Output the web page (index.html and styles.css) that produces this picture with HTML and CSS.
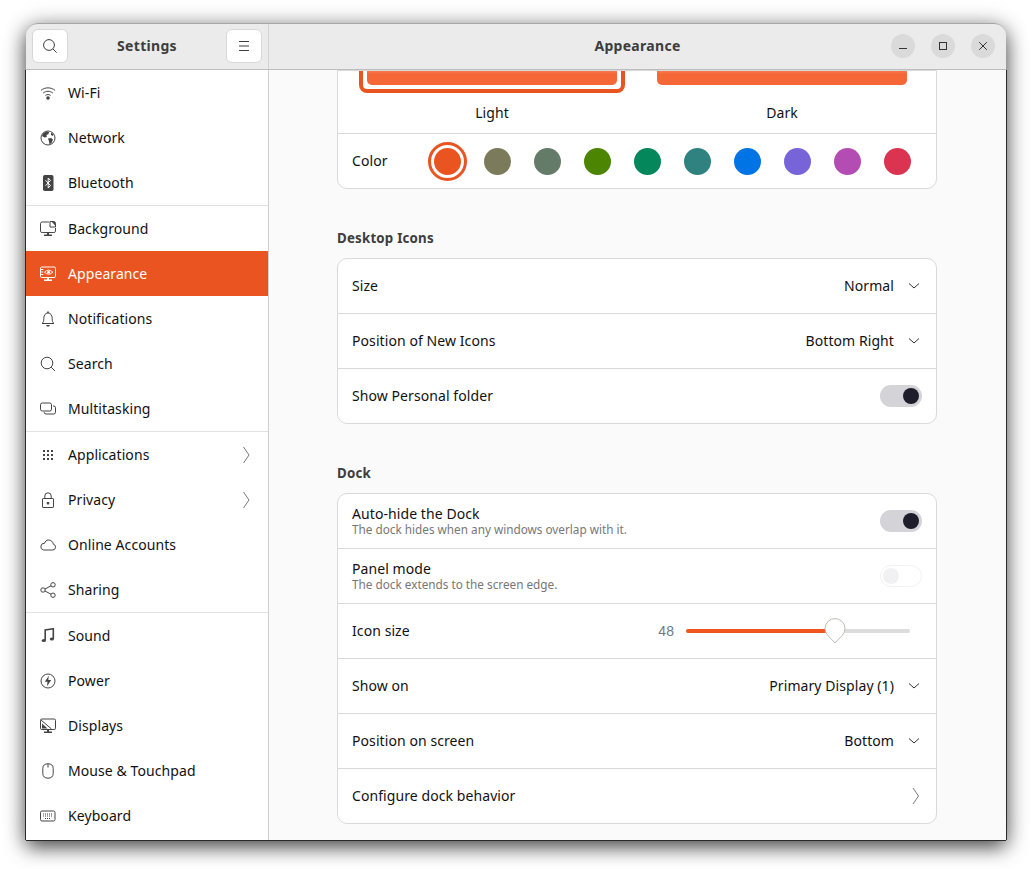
FILE: index.html
```html
<!DOCTYPE html>
<html lang="en">
<head>
<meta charset="utf-8">
<title>Settings</title>
<link rel="stylesheet" href="styles.css">
</head>
<body>
<div class="window">
  <header class="titlebar">
    <div class="title-left">
      <button class="hbtn"><svg class="ic" viewBox="0 0 16 16"><circle cx="7" cy="7" r="5.4"/><path d="M11 11l3.6 3.6"/></svg></button>
      <span class="title">Settings</span>
      <button class="hbtn"><svg class="ic" viewBox="0 0 16 16"><path d="M3 3.5h10M3 8h10M3 12.5h10"/></svg></button>
    </div>
    <div class="title-right">
      <span class="title main-title">Appearance</span>
      <div class="controls">
        <span class="wc"><svg class="ic" viewBox="0 0 16 16"><path d="M4 10.500h8"/></svg></span>
        <span class="wc"><svg class="ic" viewBox="0 0 16 16"><rect x="4.500" y="4.500" width="7" height="7"/></svg></span>
        <span class="wc"><svg class="ic" viewBox="0 0 16 16"><path d="M4.200 4.200l7.600 7.600M11.800 4.200l-7.600 7.600"/></svg></span>
      </div>
    </div>
  </header>
  <div class="body">
    <nav class="sidebar">
      <a class="item"><svg class="ic" viewBox="0 0 16 16"><path d="M1 5.400C5 2 11 2 15 5.400M3.200 8C6 5.700 10 5.700 12.800 8M5.400 10.400C6.900 9.300 9.100 9.300 10.600 10.400"/><circle class="f" cx="8" cy="13" r="1.800"/></svg><span>Wi-Fi</span></a>
      <a class="item"><svg class="ic" viewBox="0 0 16 16"><circle cx="8" cy="8" r="7"/><path class="f" d="M3 3.500L6.500 1.500 9 2 8.500 4 6.500 5 6.800 7 4.500 7.500 2 6zM8 8.500l3-.5 2 1.500-1.500 3.500-2 1.500-.5-3zM11 2.500l2.500 2-.5 1.500-2-1z"/></svg><span>Network</span></a>
      <a class="item"><svg class="ic" viewBox="0 0 16 16"><rect class="f" x="3" y="0" width="10.500" height="16" rx="1.800"/><path class="w" d="M5.500 5.300l5 5.200L8.200 13V3l2.300 2.500-5 5.200"/></svg><span>Bluetooth</span></a>
      <div class="sep"></div>
      <a class="item"><svg class="ic" viewBox="0 0 16 16"><path d="M9 1H2.200Q.5 1 .5 2.700v7.600q0 1.200 1.700 1.200h11.600q1.700 0 1.700-1.200V7"/><path d="M10 .5h3.500q2 0 2 2V6H10z"/><path class="f" d="M11.500.5h2q2 0 2 2V5z"/><path class="f" d="M7 12h2v1.500h3V15H4v-1.500h3z"/></svg><span>Background</span></a>
      <a class="item active"><svg class="ic" viewBox="0 0 16 16"><rect x=".5" y="1" width="15" height="10.500" rx="1.300"/><path d="M4.500 6.200Q8.500 2 12.800 6.200 8.500 10.200 4.500 6.200zM.8 3.500h2.500M.8 6h2.500M.8 8.500h2.500"/><circle class="f" cx="8.600" cy="6.200" r="1.400"/><path class="f" d="M7 12h2v1.500h3V15H4v-1.500h3z"/></svg><span>Appearance</span></a>
      <a class="item"><svg class="ic" viewBox="0 0 16 16"><path d="M2 12.500c1.500-1 1.800-2.300 1.800-5C3.800 4 5.500 2 8 2s4.200 2 4.200 5.500c0 2.700.3 4 1.800 5z"/><path class="f" d="M6 14h4l-1 1.500H7zM7.200.5h1.600V2H7.200z"/></svg><span>Notifications</span></a>
      <a class="item"><svg class="ic" viewBox="0 0 16 16"><circle cx="7" cy="7" r="5.800"/><path d="M11.200 11.200l3.800 3.800"/></svg><span>Search</span></a>
      <a class="item"><svg class="ic" viewBox="0 0 16 16"><rect x=".5" y="2" width="11" height="8" rx="1.800"/><path d="M13 5h.7q1.800 0 1.800 1.800v4.400q0 1.800-1.800 1.800H6q-1.800 0-1.800-1.800"/></svg><span>Multitasking</span></a>
      <div class="sep"></div>
      <a class="item"><svg class="ic" viewBox="0 0 16 16"><path class="f" d="M3 3h2v2H3zM7 3h2v2H7zM11 3h2v2h-2zM3 7h2v2H3zM7 7h2v2H7zM11 7h2v2h-2zM3 11h2v2H3zM7 11h2v2H7zM11 11h2v2h-2z"/></svg><span>Applications</span><svg class="ic chev" viewBox="0 0 16 16"><path d="M4.500 0L10 8l-5.500 8"/></svg></a>
      <a class="item"><svg class="ic" viewBox="0 0 16 16"><rect x="2.500" y="6.500" width="11" height="9" rx=".6"/><path d="M4.800 6.500V4a3.200 3.200 0 0 1 6.400 0v2.500"/><rect class="f" x="6.800" y="10" width="2.400" height="2.400"/></svg><span>Privacy</span><svg class="ic chev" viewBox="0 0 16 16"><path d="M4.500 0L10 8l-5.500 8"/></svg></a>
      <a class="item"><svg class="ic" viewBox="0 0 16 16"><path d="M3.500 13h9.300a2.900 2.900 0 0 0 .6-5.700C13 4.800 11 3 8.600 3 6.500 3 5 4.400 4.600 6.300A3.400 3.400 0 0 0 3.500 13z"/></svg><span>Online Accounts</span></a>
      <a class="item"><svg class="ic" viewBox="0 0 16 16"><circle cx="3" cy="8" r="2.200"/><circle cx="13" cy="2.800" r="2.200"/><circle cx="13" cy="13.200" r="2.200"/><path d="M5 7l6-3.200M5 9l6 3.200"/></svg><span>Sharing</span></a>
      <div class="sep"></div>
      <a class="item"><svg class="ic" viewBox="0 0 16 16"><path class="thick" d="M5.200 12.500V2L13.300.8V11"/><ellipse class="f" cx="3.800" cy="12.500" rx="2.100" ry="1.600"/><ellipse class="f" cx="11.900" cy="11" rx="2.100" ry="1.600"/></svg><span>Sound</span></a>
      <a class="item"><svg class="ic" viewBox="0 0 16 16"><circle cx="8" cy="8" r="7"/><path class="f" d="M8.800 2.800L4.800 8.800h2.700l-.5 4.400 4.200-6.200H8.300z"/></svg><span>Power</span></a>
      <a class="item"><svg class="ic" viewBox="0 0 16 16"><rect x=".5" y="1" width="15" height="10.500" rx="1.300"/><path d="M1 2l10.500 9"/><path class="f" d="M2 5.500l5.500 5H2z"/><path class="f" d="M7 12h2v1.500h3V15H4v-1.500h3z"/></svg><span>Displays</span></a>
      <a class="item"><svg class="ic" viewBox="0 0 16 16"><path d="M8 .8C5 .8 2.800 2 2.800 5.500v5c0 3 2 4.700 5.200 4.700s5.200-1.700 5.200-4.700v-5C13.200 2 11 .8 8 .8zM8 .8v3.700"/></svg><span>Mouse &amp; Touchpad</span></a>
      <a class="item"><svg class="ic" viewBox="0 0 16 16"><rect x=".5" y="3" width="14.500" height="10" rx="1.500"/><path class="hair" d="M3 6h9.500M3 8h9.500M5 10.500h6" stroke-dasharray="1 1"/></svg><span>Keyboard</span></a>
    </nav>
    <main class="content">
      <section class="card">
        <div class="themes">
          <div class="theme"><div class="frame selected"><div class="thumb"></div></div><span class="label">Light</span></div>
          <div class="theme"><div class="frame"><div class="thumb"></div></div><span class="label">Dark</span></div>
        </div>
        <div class="row color-row">
          <span class="label color-label">Color</span>
          <div class="dots">
            <span class="dot current c1"></span><span class="dot c2"></span><span class="dot c3"></span><span class="dot c4"></span><span class="dot c5"></span><span class="dot c6"></span><span class="dot c7"></span><span class="dot c8"></span><span class="dot c9"></span><span class="dot c10"></span>
          </div>
        </div>
      </section>

      <h2 class="heading">Desktop Icons</h2>
      <section class="card">
        <div class="row"><span class="label">Size</span><span class="value"><span class="label">Normal</span><svg class="ic down" viewBox="0 0 12 12"><path d="M1 3.500l5 4.500 5-4.500"/></svg></span></div>
        <div class="row"><span class="label">Position of New Icons</span><span class="value"><span class="label">Bottom Right</span><svg class="ic down" viewBox="0 0 12 12"><path d="M1 3.500l5 4.500 5-4.500"/></svg></span></div>
        <div class="row"><span class="label">Show Personal folder</span><span class="switch on"><i></i></span></div>
      </section>

      <h2 class="heading">Dock</h2>
      <section class="card">
        <div class="row"><div class="two"><span class="label">Auto-hide the Dock</span><small>The dock hides when any windows overlap with it.</small></div><span class="switch on"><i></i></span></div>
        <div class="row"><div class="two"><span class="label">Panel mode</span><small>The dock extends to the screen edge.</small></div><span class="switch off"><i></i></span></div>
        <div class="row"><span class="label">Icon size</span>
          <div class="slider"><span class="num">48</span><div class="track"><div class="fill"></div><svg class="pin" viewBox="0 0 22 26"><path d="M11 25L3.800 17.500A10 10 0 1 1 18.200 17.500z"/></svg></div></div>
        </div>
        <div class="row"><span class="label">Show on</span><span class="value"><span class="label">Primary Display (1)</span><svg class="ic down" viewBox="0 0 12 12"><path d="M1 3.500l5 4.500 5-4.500"/></svg></span></div>
        <div class="row"><span class="label">Position on screen</span><span class="value"><span class="label">Bottom</span><svg class="ic down" viewBox="0 0 12 12"><path d="M1 3.500l5 4.500 5-4.500"/></svg></span></div>
        <div class="row"><span class="label">Configure dock behavior</span><svg class="ic next" viewBox="0 0 8 16"><path d="M1 0l5.500 8L1 16"/></svg></div>
      </section>
    </main>
  </div>
</div>
</body>
</html>
```
FILE: styles.css
```css
* { box-sizing: border-box; }
html, body { margin: 0; height: 100%; }
body {
  background: #fff;
  padding: 23px 26px 29px;
  font-family: "Noto Sans", "Open Sans", sans-serif;
  font-size: 14px;
  letter-spacing: .08px;
  color: #111;
  overflow: hidden;
}
.window {
  width: 980px;
  height: 817px;
  display: flex;
  flex-direction: column;
  border-radius: 12px 12px 0 0;
  box-shadow: 0 7px 20px rgba(0,0,0,.7), 0 0 24px rgba(0,0,0,.15);
}
.ic { width: 16px; height: 16px; flex: none; fill: none; stroke: currentColor; stroke-width: 1; }
.ic .f { fill: currentColor; stroke: none; }
.ic .w { stroke: #fff; fill: none; }
.ic .thick { stroke-width: 1.600; }
.ic .hair { stroke-width: 1; }

.titlebar {
  height: 47px;
  flex: none;
  display: flex;
  background: #ebebeb;
  border-top: 1px solid #a6a6a6;
  border-bottom: 1px solid #bdbdbd;
  border-radius: 12px 12px 0 0;
  color: #3d3d3d;
}
.title-left {
  width: 243px;
  flex: none;
  display: flex;
  align-items: center;
  justify-content: space-between;
  padding: 0 6px 1px;
  border-right: 1px solid #d3d3d3;
}
.title-right { flex: 1; position: relative; display: flex; align-items: center; justify-content: center; padding-bottom: 1px; }
.title { font-weight: 700; font-size: 14px; letter-spacing: .3px; padding-bottom: 1px; }
.hbtn {
  width: 36px;
  height: 34px;
  display: flex;
  align-items: center;
  justify-content: center;
  padding: 0;
  background: #fff;
  border: 1px solid #d8d8d8;
  border-radius: 6px;
  color: #3d3d3d;
}
.controls { position: absolute; right: 11px; top: 10px; display: flex; gap: 16px; }
.wc { width: 24px; height: 24px; border-radius: 50%; background: #dadada; display: flex; align-items: center; justify-content: center; color: #333; }

.body {
  flex: 1;
  min-height: 0;
  display: flex;
  box-shadow: -1px 0 0 #2a2a2a, 1px 0 0 #2a2a2a, 0 1px 0 #2a2a2a;
}
.sidebar {
  width: 243px;
  flex: none;
  background: #fff;
  border-right: 1px solid #cfcfcf;
  overflow: hidden;
}
.item {
  height: 45px;
  display: flex;
  align-items: center;
  gap: 12px;
  padding: 0 13px 0 14px;
  color: #111;
}
.item > .ic { color: #444; }
.item.active { background: #e95420; color: #fff; }
.item.active > .ic { color: #fff; }
.sep { height: 1px; background: #e2e2e2; }
.item > .chev { margin-left: auto; color: #777; }

.content {
  flex: 1;
  min-width: 0;
  background: #fafafa;
  padding: 0 68px;
  overflow: hidden;
}
.card {
  width: 600px;
  background: #fff;
  border: 1px solid #d9d9d9;
  border-radius: 0 0 10px 10px;
}
.card + .heading + .card { border-radius: 10px; }
.heading {
  margin: 41px 0 11px;
  height: 17px;
  line-height: 17px;
  font-size: 13.300px;
  font-weight: 700;
  color: #3d3d3d;
  letter-spacing: .2px;
}
.themes {
  height: 63px;
  display: grid;
  grid-template-columns: 266px 266px;
  column-gap: 24px;
  padding-left: 21px;
  border-bottom: 1px solid #d9d9d9;
}
.theme { display: flex; flex-direction: column; align-items: center; }
.frame {
  width: 266px;
  height: 22px;
  padding: 0 4px 4px;
  border: 4px solid transparent;
  border-top: 0;
  border-radius: 0 0 8px 8px;
}
.frame.selected { border-color: #e95420; }
.thumb { height: 14px; background: linear-gradient(#f77a50, #f66737 3px); border-radius: 0 0 5px 5px; }
.theme .label { margin-top: 10px; line-height: 20px; padding-bottom: 0; }

.row {
  height: 55px;
  display: flex;
  align-items: center;
  justify-content: space-between;
  padding: 0 14px;
  border-bottom: 1px solid #d9d9d9;
}
.row:last-child { height: 54px; border-bottom: 0; }
.label { color: #111; padding-bottom: 2px; }
.value { display: flex; align-items: center; gap: 14px; padding-right: 2px; }
.down { width: 12px; height: 12px; color: #333; }
.next { width: 8px; height: 16px; color: #777; margin-right: 2px; }
.two { display: flex; flex-direction: column; line-height: 15px; }
.two .label { padding-bottom: 1px; }
.two small { font-size: 11.750px; color: #777; letter-spacing: 0; }

.color-row { padding-right: 25.500px; }
.color-row .label { line-height: 20px; padding-bottom: 0; }
.dots { display: flex; gap: 23px; align-items: center; }
.dot { width: 27px; height: 27px; border-radius: 50%; position: relative; }
.dot.current::after {
  content: "";
  position: absolute;
  inset: -6px;
  border: 3.500px solid #e95420;
  border-radius: 50%;
}
.c1 { background: #e95420; }
.c2 { background: #7b7a5a; }
.c3 { background: #657b69; }
.c4 { background: #4b8501; }
.c5 { background: #03875b; }
.c6 { background: #308280; }
.c7 { background: #0073e5; }
.c8 { background: #7764d8; }
.c9 { background: #b34cb3; }
.c10 { background: #da3450; }

.switch { width: 42px; height: 22px; border-radius: 11px; display: flex; align-items: center; padding: 0 3px; }
.switch i { width: 16px; height: 16px; border-radius: 50%; display: block; }
.switch.on { background: #d3d3d8; justify-content: flex-end; }
.switch.on i { background: #1d1d2b; }
.switch.off { border: 1px solid #f2f2f2; background: #fff; padding: 0 2px; }
.switch.off i { background: #f1f1f3; }

.slider { display: flex; align-items: center; gap: 12px; margin-right: 12px; }
.num { font-family: "Liberation Sans", sans-serif; font-size: 14px; color: #777; }
.track { width: 224px; height: 4px; background: #dcdcdc; border-radius: 2px; position: relative; }
.fill { width: 146px; height: 4px; background: #f0561d; border-radius: 2px; }
.pin { position: absolute; left: 138px; top: -11px; width: 22px; height: 26px; fill: #fff; stroke: #bfbbb5; stroke-width: 1; }
```
